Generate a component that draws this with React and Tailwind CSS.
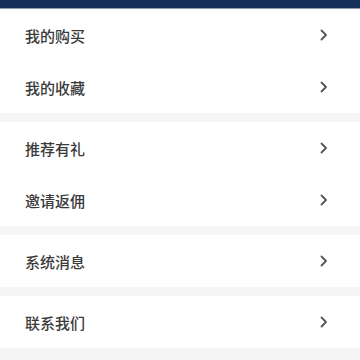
import React from 'react';

const groups = [
  ['我的购买', '我的收藏'],
  ['推荐有礼', '邀请返佣'],
  ['系统消息'],
  ['联系我们'],
];

const Chevron = () => (
  <svg width="8" height="12" viewBox="0 0 8 12" fill="none">
    <path d="M1.5 1.5L6 6L1.5 10.5" stroke="#555" strokeWidth="1.8" strokeLinecap="round" strokeLinejoin="round" />
  </svg>
);

export default function App() {
  return (
    <div className="w-[360px] h-[360px] overflow-hidden bg-[#f5f5f5]" style={{ fontFamily: '"Noto Sans CJK SC", "Liberation Sans", sans-serif' }}>
      <div className="h-[9px] bg-[#14305a] border-b border-[#8d9bb0]" />
      <div className="flex flex-col gap-[9px]">
        {groups.map((g, i) => (
          <div key={i} className="bg-white">
            {g.map(label => (
              <div key={label} className="h-[52px] flex items-center justify-between pl-[25px] pr-[32px]">
                <span className="text-[15px] font-medium text-[#3a3a3a] leading-none">{label}</span>
                <Chevron />
              </div>
            ))}
          </div>
        ))}
      </div>
    </div>
  );
}
